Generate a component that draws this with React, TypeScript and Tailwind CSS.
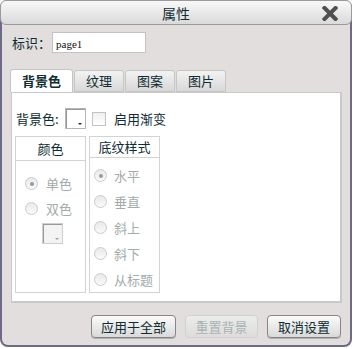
import React from "react";

const font = { fontFamily: '"Noto Sans CJK SC", "Noto Sans", sans-serif' };

function Radio({ checked }: { checked?: boolean }) {
  return (
    <span className="relative flex h-[13px] w-[13px] shrink-0 items-center justify-center rounded-full border border-[#c9cccc] bg-gradient-to-b from-[#e9e9e9] to-[#fafafa]">
      {checked && <span className="h-[4px] w-[4px] rounded-full bg-[#9a9a9a]" />}
    </span>
  );
}

function Swatch({ disabled }: { disabled?: boolean }) {
  return (
    <div
      className={`relative h-[21px] w-[21px] border ${
        disabled ? "border-[#cfcfcf] bg-[#f3f3f3]" : "border-[#b5b5b5] bg-white"
      } shadow-[inset_1px_1px_0_#9a9a9a]`}
    >
      <span
        className={`absolute bottom-[3px] right-[3px] h-0 w-0 border-x-[2px] border-t-[2px] border-x-transparent ${
          disabled ? "border-t-[#a0a0a0]" : "border-t-[#222]"
        }`}
      />
    </div>
  );
}

function Btn({ label, w, disabled }: { label: string; w: string; disabled?: boolean }) {
  return (
    <div
      className={`flex h-[23px] ${w} items-center justify-center rounded-[4px] border text-[13px] ${
        disabled
          ? "border-[#cfd2d2] bg-gradient-to-b from-[#ececec] to-[#dedcdb] text-[#a9b3b3]"
          : "border-[#858585] bg-gradient-to-b from-[#fbfbfb] to-[#d9d9d9] text-[#0f2c33] shadow-[0_1px_0_#b0b0b0]"
      }`}
    >
      {label}
    </div>
  );
}

export default function App() {
  const tabs = [
    { t: "纹理", w: "w-[50px]" },
    { t: "图案", w: "w-[50px]" },
    { t: "图片", w: "w-[50px]" },
  ];
  return (
    <div className="h-[349px] w-[355px] bg-white" style={font}>
      <div className="relative flex h-[347px] w-[352px] flex-col rounded-[8px] bg-[#e1dedd]">
        {/* outer frame */}
        <div className="pointer-events-none absolute inset-0 rounded-[8px] border-x-2 border-b-2 border-[#6e6a84]" />
        {/* title bar */}
        <div className="relative z-10 flex h-[25px] items-center justify-center rounded-[6px] border border-[#9b9b9b] bg-gradient-to-b from-[#f8f8f8] to-[#dadada] pt-[1px] text-[14px] text-[#0f2c33]">
          属性
          <svg
            className="absolute right-[13px] top-[5px]"
            width="16"
            height="15"
            viewBox="0 0 16 15"
          >
            <path d="M2.5 2 L13.5 13 M13.5 2 L2.5 13" stroke="#4f4f4f" strokeWidth="4" strokeLinecap="square" />
          </svg>
        </div>

        {/* 标识 row */}
        <div className="mt-[7px] flex h-[21px] items-center pl-[12px] text-[13px] text-[#0f2c33]">
          <span className="w-[40px]">标识：</span>
          <div
            className="flex h-[21px] w-[94px] items-end border border-[#c3c3c3] bg-white pb-[2px] pl-[3px] text-[11px] leading-none text-[#111]"
            style={{ fontFamily: '"Liberation Serif", serif' }}
          >
            page1
          </div>
        </div>

        {/* tabs */}
        <div className="mt-[17px] flex h-[22px] items-end gap-[1px] pl-[10px]">
          <div className="relative z-10 flex h-[23px] w-[63px] items-center justify-center rounded-t-[3px] border border-b-0 border-[#c6c6c6] bg-white text-[13px] font-bold text-[#0f2c33]">
            背景色
          </div>
          {tabs.map((x) => (
            <div
              key={x.t}
              className={`flex h-[22px] ${x.w} items-center justify-center rounded-t-[3px] border border-[#c6c6c6] bg-gradient-to-b from-[#f3f3f3] to-[#d8d8d8] text-[13px] text-[#0f2c33]`}
            >
              {x.t}
            </div>
          ))}
        </div>

        {/* panel */}
        <div className="ml-[11px] flex h-[211px] w-[331px] flex-col border border-b-2 border-r-2 border-[#c8c9c9] bg-white px-[3px] pt-[15px]">
          <div className="flex h-[21px] items-center text-[13px] text-[#0f2c33]">
            <span className="ml-[1px] w-[49px]">背景色:</span>
            <Swatch />
            <span className="ml-[6px] h-[14px] w-[14px] border border-[#c2c2c2] bg-gradient-to-b from-[#f0f0f0] to-white" />
            <span className="ml-[8px]">启用渐变</span>
          </div>
          <div className="mt-[7px] flex gap-[3px]">
            {/* 颜色 */}
            <div className="flex h-[157px] w-[71px] flex-col border border-[#d2d4d4]">
              <div className="flex h-[24px] items-center justify-center border-b border-[#d2d4d4] text-[13px] text-[#0f2c33]">
                颜色
              </div>
              <div className="flex flex-col pl-[9px] pt-[10px] text-[13px] text-[#a3abab]">
                <div className="flex h-[25px] items-center gap-[8px]">
                  <Radio checked />
                  <span>单色</span>
                </div>
                <div className="flex h-[25px] items-center gap-[8px]">
                  <Radio />
                  <span>双色</span>
                </div>
              </div>
              <div className="mt-[2px] flex justify-center pl-[3px]">
                <Swatch disabled />
              </div>
            </div>
            {/* 底纹样式 */}
            <div className="flex h-[157px] w-[71px] flex-col border border-[#d2d4d4]">
              <div className="flex h-[24px] items-center justify-center border-b border-[#d2d4d4] text-[13px] text-[#0f2c33]">
                底纹样式
              </div>
              <div className="flex flex-col pl-[4px] pt-[5px] text-[13px] text-[#a3abab]">
                {["水平", "垂直", "斜上", "斜下", "从标题"].map((t, i) => (
                  <div key={t} className="flex h-[26px] items-center gap-[7px]">
                    <Radio checked={i === 0} />
                    <span>{t}</span>
                  </div>
                ))}
              </div>
            </div>
          </div>
        </div>

        {/* buttons */}
        <div className="mt-[12px] flex justify-end gap-[9px] pr-[11px]">
          <Btn label="应用于全部" w="w-[85px]" />
          <Btn label="重置背景" w="w-[73px]" disabled />
          <Btn label="取消设置" w="w-[74px]" />
        </div>
      </div>
    </div>
  );
}
